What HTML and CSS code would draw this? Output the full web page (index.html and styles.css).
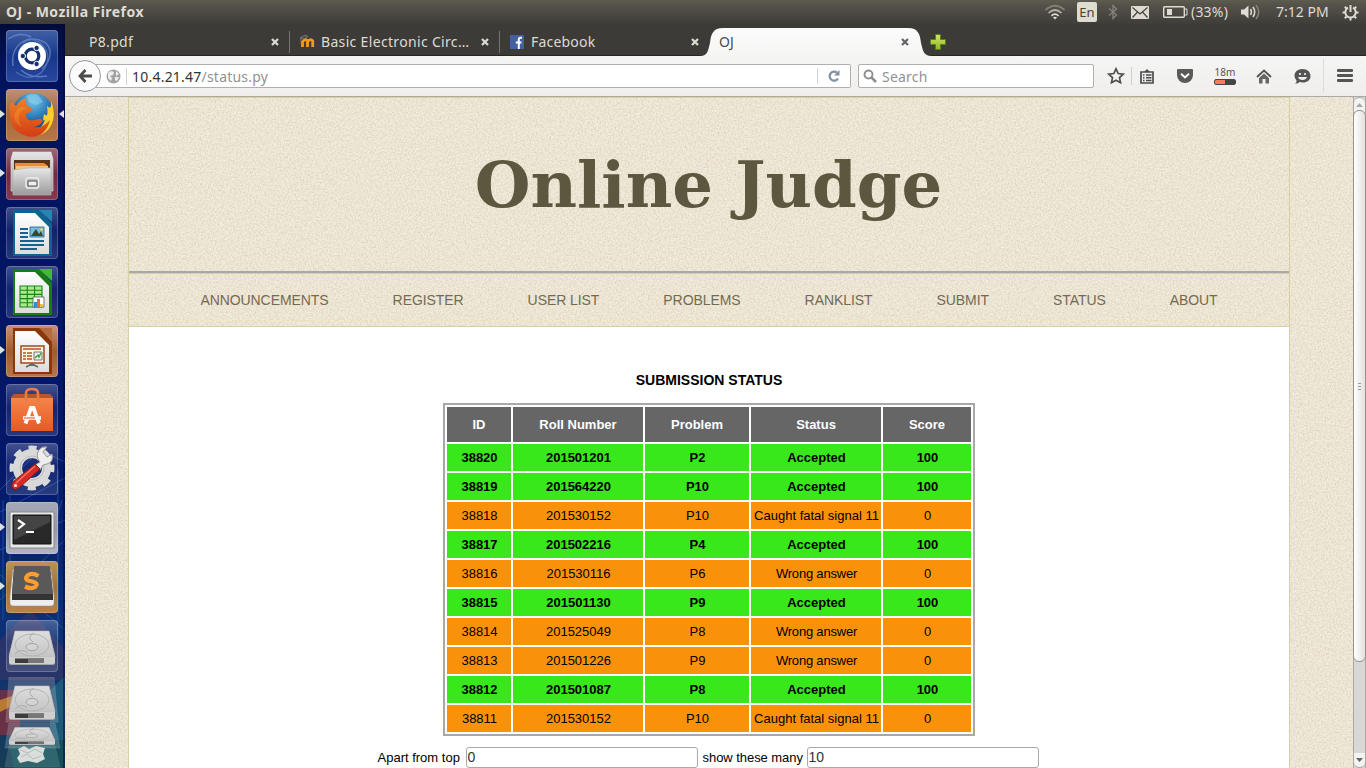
FILE: index.html
```html
<!DOCTYPE html>
<html lang="en">
<head>
<meta charset="utf-8">
<title>OJ</title>
<link rel="stylesheet" href="styles.css">
</head>
<body>
<svg class="defs" width="0" height="0" aria-hidden="true">
  <defs>
    <linearGradient id="silver" x1="0" y1="0" x2="0" y2="1"><stop offset="0" stop-color="#e6e6e6"/><stop offset="1" stop-color="#9a9a9a"/></linearGradient>
    <linearGradient id="paper" x1="0" y1="0" x2="0" y2="1"><stop offset="0" stop-color="#fff"/><stop offset="1" stop-color="#dcdcdc"/></linearGradient>
    <linearGradient id="metal" x1="0" y1="0" x2="0" y2="1"><stop offset="0" stop-color="#dedede"/><stop offset="1" stop-color="#c4c4c4"/></linearGradient>
    <linearGradient id="bag" x1="0" y1="0" x2="0" y2="1"><stop offset="0" stop-color="#f4854c"/><stop offset="1" stop-color="#e85a20"/></linearGradient>
    <radialGradient id="globe" cx=".5" cy=".2" r=".8"><stop offset="0" stop-color="#6fc4ea"/><stop offset=".6" stop-color="#1f66a8"/><stop offset="1" stop-color="#0d3263"/></radialGradient>
    <linearGradient id="fox" x1="0" y1="0" x2="0" y2="1"><stop offset="0" stop-color="#f08028"/><stop offset="1" stop-color="#d33c14"/></linearGradient>
    <linearGradient id="plus" x1="0" y1="0" x2="0" y2="1"><stop offset="0" stop-color="#d4e46a"/><stop offset="1" stop-color="#8fb824"/></linearGradient>
    <linearGradient id="tabfill" x1="0" y1="0" x2="0" y2="1"><stop offset="0" stop-color="#fcfcfc"/><stop offset="1" stop-color="#f5f5f4"/></linearGradient>
    <g id="drive">
      <path d="M9 11H43L49 35V43Q49 45 47 45H5Q3 45 3 43V35Z" fill="#a5a5a5"/>
      <path d="M9 11H43L49 37H3Z" fill="url(#metal)" stroke="#bbb" stroke-width=".6"/>
      <ellipse cx="26" cy="25" rx="17" ry="11" fill="none" stroke="#b5b5b5"/>
      <ellipse cx="26" cy="27" rx="6" ry="3.6" fill="#d4d4d4" stroke="#a2a2a2"/>
      <path d="M28 13Q20 17 27 22M9 34Q14 28 21 32" fill="none" stroke="#aaa"/>
      <path d="M3 37H49V42Q49 44 47 44H5Q3 44 3 42Z" fill="#cfcfcf"/>
      <path d="M9 38.500H38V43H9Z" fill="#3c3c3c"/><path d="M22 38.500H38V43H22Z" fill="#777"/>
    </g>
  </defs>
</svg>

<header class="panel">
  <div class="panel-title">OJ - Mozilla Firefox</div>
  <div class="indicators">
    <svg class="i-wifi" width="22" height="16" viewBox="0 0 22 16" fill="none" stroke-width="1.7"><path d="M1.500 6Q11-2.500 20.500 6" stroke="#817f76"/><path d="M4.500 9Q11 3 17.500 9" stroke="#b5b2a8"/><path d="M7.500 11.800Q11 8.500 14.500 11.800" stroke="#dfdbd2"/><path d="M9 13.500Q11 11.800 13 13.500L11 15.500Z" fill="#dfdbd2"/></svg>
    <span class="lang">En</span>
    <svg class="i-bt" width="10" height="16" viewBox="0 0 10 16" fill="none" stroke="#85837b" stroke-width="1.300"><path d="M1 4.500L8.500 11L5 14.500V1.500L8.500 5L1 11.500"/></svg>
    <svg class="i-mail" width="18" height="13" viewBox="0 0 18 13"><rect width="18" height="13" rx="1" fill="#dfdbd2"/><path d="M1.500 1.500L9 8L16.500 1.500M1.500 11.500L6.500 6M16.500 11.500L11.500 6" fill="none" stroke="#45443e" stroke-width="1.200"/></svg>
    <svg class="i-bat" width="25" height="12" viewBox="0 0 25 12"><rect x=".7" y=".7" width="20.600" height="10.600" rx="1" fill="none" stroke="#dfdbd2" stroke-width="1.400"/><path d="M4 3H9V9H4Z" fill="#dfdbd2"/><path d="M22 3H24V9H22" fill="none" stroke="#dfdbd2"/></svg>
    <span class="pct">(33%)</span>
    <svg class="i-vol" width="20" height="16" viewBox="0 0 20 16"><path d="M0 5.500H3L7.500 1.500V14.500L3 10.500H0Z" fill="#dfdbd2"/><g fill="none" stroke-width="1.500"><path d="M9.500 5Q11.500 8 9.500 11" stroke="#dfdbd2"/><path d="M12 3Q15.500 8 12 13" stroke="#dfdbd2"/><path d="M15 1Q20.500 8 15 15" stroke="#85837b"/></g></svg>
    <span class="clock">7:12 PM</span>
    <svg class="i-gear" width="17" height="17" viewBox="0 0 17 17" fill="none" stroke="#dfdbd2"><path d="M6 3.700A5.200 5.200 0 1 0 11 3.700" stroke-width="1.900"/><path d="M8.500 1V8" stroke-width="2"/><path d="M.5 8.500H3M14 8.500H16.500M8.500 14V16.500M2.800 2.800L4.500 4.500M14.200 2.800L12.500 4.500M2.800 14.200L4.500 12.500M14.200 14.200L12.500 12.500" stroke-width="2"/></svg>
  </div>
</header>

<div class="desktop">
<aside class="launcher">
  <svg class="wall" width="65" height="744" viewBox="0 24 65 744">
    <defs><linearGradient id="w" x1="0" y1="0" x2="0" y2="1"><stop offset="0" stop-color="#020b3a"/><stop offset=".06" stop-color="#03135c"/><stop offset=".6" stop-color="#04186a"/><stop offset=".8" stop-color="#0c2f78"/><stop offset="1" stop-color="#153d55"/></linearGradient></defs>
    <path fill="url(#w)" d="M0 24H65V768H0Z"/>
    <g fill="none" stroke="#2d6fb0" opacity=".55"><path d="M0 490L40 450L65 462M0 512L65 478M0 550L65 520M3 500V620M10 495V600M58 470V640M0 600L65 540M0 575L65 630M62 500L50 540"/></g>
    <path d="M0 640L30 610L65 650V680H0Z" fill="#3a3566" opacity=".6"/><path d="M0 690H20V735H0Z" fill="#8d2d3a" opacity=".7"/><path d="M50 690L65 676V740H50Z" fill="#24728a" opacity=".6"/><path d="M0 700L12 696V706L0 712Z" fill="#b87935"/><path d="M8 740H65V768H14Z" fill="#14545a" opacity=".8"/><path d="M63 24H65V768H63Z" fill="#020a2c" opacity=".5"/>
  </svg>

  <div class="tile ubuntu"><svg viewBox="0 0 52 52"><g fill="none" stroke="#7e9bd5" opacity=".6" stroke-width="1.500"><path d="M7 36C4 15 22 3 38 12C45 16 48 28 36 39"/><path d="M17 13C29 3 42 17 42 29C39 45 25 53 10 42" opacity=".7"/><path d="M2 9Q14 1 25 7M41 46Q25 49 15 40"/></g><circle cx="26" cy="26" r="14" fill="#fff"/><circle cx="26" cy="26" r="6.800" fill="none" stroke="#17316f" stroke-width="3.200"/><g fill="#17316f" stroke="#fff" stroke-width="1"><circle cx="16.800" cy="26" r="2.700"/><circle cx="30.600" cy="18" r="2.700"/><circle cx="30.600" cy="34" r="2.700"/></g></svg></div>

  <div class="tile firefox"><svg viewBox="0 0 52 52"><circle cx="27" cy="25" r="21" fill="url(#globe)"/><path d="M20 7Q26 3 32 6L37 13L30 16L23 13Z" fill="#8bd0ef" opacity=".6"/><path d="M45 12Q52 29 42 41Q31 51 17 44Q34 45 39 31Q36 33 38 25Q43 30 41 17Q46 22 45 12Z" fill="#fbd02d"/><path d="M5 13L10 17Q14 10 21 9Q18 13 22 17L27 20Q23 24 20 25Q20 33 29 31Q34 29 37 31Q34 38 27 38Q36 40 44 31Q40 47 26 48Q7 46 4 29Q3 20 5 13Z" fill="url(#fox)"/><path d="M12 19Q17 17 21 19L15 22Q10 30 16 38Q8 34 8 26Z" fill="#f8ae3d" opacity=".3"/></svg><i class="run"></i><i class="focus"></i></div>

  <div class="tile files"><svg viewBox="0 0 52 52"><path d="M7 4H45L47 11V43H5V11Z" fill="url(#silver)" stroke="#ddd" stroke-width=".6"/><path d="M8 12H44V23H8Z" fill="#56331c"/><path d="M9 15H38L42 18V22H9Z" fill="#f28a31"/><path d="M10 18H42V21H10Z" fill="#fbc07b"/><path d="M7 22L23 20H45V47H7Z" fill="url(#silver)" stroke="#b8b8b8" stroke-width=".7"/><rect x="20" y="30" width="12.500" height="10" rx="2" fill="#bbb" stroke="#eee" stroke-width="1.400"/><path d="M22 33H31V38H22Z" fill="#eee" stroke="#555"/></svg><i class="run"></i></div>

  <div class="tile writer"><svg viewBox="0 0 52 52"><path d="M7 3H34L46 17V49H7Z" fill="#0c658f"/><path d="M33 3H46V15Z" fill="#2387b2"/><path d="M9 6H29L43 20V47H9Z" fill="url(#paper)"/><path d="M14 22H22M14 26H22M14 30H22M14 34H38M14 38H38M14 42H31" stroke="#16638f" stroke-width="2"/><path d="M24 20H38V30H24Z" fill="#79bce0" stroke="#19638b" stroke-width=".8"/><path d="M25 29L30 22L33 27L35 24L37 29Z" fill="#36482d"/><circle cx="35.500" cy="22.500" r="1.300" fill="#f7db38"/></svg></div>

  <div class="tile calc"><svg viewBox="0 0 52 52"><path d="M7 3H34L46 17V49H7Z" fill="#177c18"/><path d="M33 3H46V15Z" fill="#42b939"/><path d="M9 6H29L43 20V47H9Z" fill="url(#paper)"/><path d="M14 20H36V41H14Z" fill="#a7eb88"/><path d="M14 20H36V41H14ZM14 24.200H36M14 28.400H36M14 32.600H36M14 36.800H36M21.300 20V41M28.600 20V41" fill="none" stroke="#18851b" stroke-width="1.100"/><path d="M27 31H38V41H27Z" fill="#fff" stroke="#555" stroke-width=".8"/><path d="M28 36H31V41H28Z" fill="#2e91cb"/><path d="M31 33H34V41H31Z" fill="#ee6c28"/><path d="M34 38H37V41H34Z" fill="#edc429"/></svg></div>

  <div class="tile impress"><svg viewBox="0 0 52 52"><path d="M7 3H34L46 17V49H7Z" fill="#8b3709"/><path d="M33 3H46V15Z" fill="#b46b40"/><path d="M9 6H29L43 20V47H9Z" fill="url(#paper)"/><path d="M15 21H38V38H15Z" fill="#fff4e5" stroke="#a44817" stroke-width="1.500"/><path d="M17 24H35M17 28H20M17 31H20M17 34H20M21 28H26M21 31H26M21 34H26" stroke="#b65220" stroke-width="1.700"/><path d="M28 27H36V35H28Z" fill="#eee" stroke="#555" stroke-width=".8"/><path d="M29 33L32 30L33 32L35 28" fill="none" stroke="#369c32" stroke-width="1.300"/><path d="M20 42L26 39L32 42M26 38V41" fill="none" stroke="#666" stroke-width="1.700"/></svg><i class="run"></i></div>

  <div class="tile software"><svg viewBox="0 0 52 52"><path d="M5 13L8 10H44L47 13V15H5Z" fill="#b8542e"/><path d="M5 14H47V47H5Z" fill="url(#bag)"/><path d="M20 18V9Q20 5 26 5Q32 5 32 9V18" fill="none" stroke="#ee7a4b" stroke-width="2.600"/><path d="M19.500 39.500L25 24H27.500L33 39.500" fill="none" stroke="#fff" stroke-width="3.800"/><path d="M17 34H35" stroke="#fff" stroke-width="3.600"/><path d="M18 34H29" stroke="#ed6a2c" stroke-width="1.200"/></svg></div>

  <div class="tile settings"><svg viewBox="0 0 52 52"><circle cx="26" cy="25" r="14.500" fill="none" stroke="#d9d9d9" stroke-width="9"/><circle cx="26" cy="25" r="20" fill="none" stroke="#d9d9d9" stroke-width="5" stroke-dasharray="8 7.700" stroke-dashoffset="4"/><circle cx="26" cy="25" r="12" fill="none" stroke="#bcbcbc"/><path d="M34 19Q29 13 33 7Q36 3 41 4L37 9L41 14L46 11Q48 19 41 21L37 22L34 27L29 22Z" fill="#eee" stroke="#999"/><path d="M29 21L34 26L14 44Q8 49 6 44Q5 41 8 38Z" fill="#d52a26" stroke="#8c1715"/><path d="M29 23L10 40" stroke="#ef7467" stroke-width="1.500"/><circle cx="9.500" cy="42.500" r="1.600" fill="#eee"/></svg></div>

  <div class="tile terminal"><svg viewBox="0 0 52 52"><path d="M4 10H48V46H4Z" fill="#e8e8e8" stroke="#888"/><path d="M7 13H45V42H7Z" fill="#292929" stroke="#111"/><path d="M8 14H44V20L8 38Z" fill="#575757" opacity=".6"/><path d="M12 18L18 22L12 27" fill="none" stroke="#fff" stroke-width="2.200"/><path d="M20 30H28" stroke="#fff" stroke-width="2"/></svg><i class="run"></i></div>

  <div class="tile sublime"><svg viewBox="0 0 52 52"><path d="M7 8H45L48 35V42Q48 45 45 45H7Q4 45 4 42V35Z" fill="#eee" stroke="#999" stroke-width=".6"/><path d="M10 5H42Q44 5 44 7L47 34V39H6V34L8 7Q8 5 10 5Z" fill="#343434"/><path d="M10 5H42Q44 5 44 7L47 33H6L8 7Q8 5 10 5Z" fill="#595959"/><path d="M32.500 15Q26 11 21.500 14.500Q18 18.500 23 19.800L28 21Q33 23 29 26Q25 28.500 19 25.500" fill="none" stroke="#ff9d30" stroke-width="4.200"/></svg><i class="run"></i></div>

  <div class="tile disk"><svg viewBox="0 0 52 52"><use href="#drive"/></svg></div>

  <svg class="stack" width="65" height="91" viewBox="0 677 65 91">
    <path d="M9 677H54L58 722H6Z" fill="#cbb6c0" opacity=".28" stroke="#fff" stroke-opacity=".6"/><use href="#drive" x="6" y="675"/>
    <path d="M9 723H55L60 748H5Z" fill="#a9b8c8" opacity=".3" stroke="#fff" stroke-opacity=".5"/><g transform="translate(6 722) scale(1 .51)"><use href="#drive"/></g>
    <path d="M9 746H55L60 767H5Z" fill="#9cc0c0" opacity=".2" stroke="#fff" stroke-opacity=".5"/><path d="M18 749L24 746L29 749L36 746L45 748L43 754L45 759L37 763L28 761L20 763L17 758L20 754Z" fill="#d9dedc"/><path d="M20 750L28 753L35 749L42 753M21 757L27 754L33 759L41 756" fill="none" stroke="#b4bcba"/>
  </svg>
</aside>

<main class="browser">
  <div class="tabs">
    <div class="tab t1"><span class="label">P8.pdf</span><svg class="x" viewBox="0 0 10 10"><path d="M2 2L8 8M8 2L2 8"/></svg></div>
    <div class="tab t2"><svg class="fav" width="15" height="15" viewBox="0 0 15 15"><path d="M2.500 13V7M2.500 8Q5 4 7.500 7V13M7.500 8Q10 4 12.700 7V13" fill="none" stroke="#f59b17" stroke-width="2.800"/><path d="M0 4L5 1L8 2.500L4 5ZM1 4V10" fill="#4b4b49" stroke="#888" stroke-width=".7"/></svg><span class="label">Basic Electronic Circ…</span><svg class="x" viewBox="0 0 10 10"><path d="M2 2L8 8M8 2L2 8"/></svg></div>
    <div class="tab t3"><svg class="fav" width="14" height="14" viewBox="0 0 14 14"><path fill="#4560a0" d="M0 0H14V14H0Z"/><path d="M12 2.800H10.500Q8.800 2.800 8.800 4.500V14M5.800 7.500H11.500" fill="none" stroke="#fff" stroke-width="2"/></svg><span class="label">Facebook</span><svg class="x" viewBox="0 0 10 10"><path d="M2 2L8 8M8 2L2 8"/></svg></div>
    <div class="tab active"><svg class="shape" width="236" height="28" viewBox="0 0 236 28"><path d="M0 28C8 28 8 22 10 15C11 6 13 0 23 0H208C218 0 220 6 221 15C223 22 223 28 232 28Z" fill="url(#tabfill)"/></svg><span class="label">OJ</span><svg class="x" viewBox="0 0 10 10"><path d="M2 2L8 8M8 2L2 8"/></svg></div>
    <svg class="add" width="16" height="16" viewBox="0 0 16 16"><path d="M5.500.5H10.500V5.500H15.500V10.500H10.500V15.500H5.500V10.500H.5V5.500H5.500Z" fill="url(#plus)" stroke="#56801c"/></svg>
  </div>

  <div class="toolbar">
    <div class="back"><svg width="16" height="16" viewBox="0 0 16 16" fill="none" stroke="#4c4c4c" stroke-width="2.800"><path d="M8.500 2L3 8L8.500 14M3 8H15"/></svg></div>
    <div class="url">
      <svg class="world" width="15" height="15" viewBox="0 0 15 15"><circle cx="7.500" cy="7.500" r="7" fill="#a3a3a3"/><path d="M2 4L5 2L8 3L7 6L4 7L6 9L5 12L2 9ZM10 2L13 5L10 7ZM9 8L13 8L11 12L9 11Z" fill="#eee"/></svg>
      <span class="address">10.4.21.47<em>/status.py</em></span>
      <span class="reload"><svg width="14" height="14" viewBox="0 0 14 14"><path d="M11 9.500A4.500 4.500 0 1 1 10 3.700" fill="none" stroke="#8290a0" stroke-width="2.200"/><path d="M12.500 1V6.500H7Z" fill="#8290a0"/></svg></span>
    </div>
    <div class="search"><svg width="14" height="14" viewBox="0 0 14 14" fill="none" stroke="#8d8d8d"><circle cx="5.500" cy="5.500" r="4" stroke-width="1.900"/><path d="M8.500 8.500L13 13" stroke-width="2.500"/></svg><span>Search</span></div>
    <div class="tools">
      <svg width="18" height="18" viewBox="0 0 18 18"><path d="M9 1.800L11.200 6.500L16.300 7.100L12.500 10.600L13.500 15.700L9 13.200L4.500 15.700L5.500 10.600L1.700 7.100L6.800 6.500Z" fill="none" stroke="#4c4c4c" stroke-width="1.700"/></svg>
      <i class="s1"></i>
      <svg class="list" width="14" height="15" viewBox="0 0 14 15"><path d="M1 3H13V14H1Z" fill="#eee" stroke="#4c4c4c" stroke-width="1.700"/><path d="M4 3L7 0L10 3Z" fill="#4c4c4c"/><path d="M3 6H4.500M6 6H11.500M3 8.800H4.500M6 8.800H11.500M3 11.500H4.500M6 11.500H11.500" stroke="#4c4c4c" stroke-width="1.400"/></svg>
      <svg class="pocket" width="16" height="14" viewBox="0 0 16 14"><path d="M1 0H15Q16 0 16 1V6A8 8 0 0 1 0 6V1Q0 0 1 0Z" fill="#5a5a5a"/><path d="M4 4.800L8 8.500L12 4.800" fill="none" stroke="#fff" stroke-width="2"/></svg>
      <span class="timer"><b>18m</b><u></u></span>
      <svg class="home" width="16" height="15" viewBox="0 0 16 15"><path d="M1 8L8 1.500L15 8" fill="none" stroke="#555" stroke-width="1.800"/><path d="M3 9L8 4.500L13 9V14.500H9.500V10H6.500V14.500H3Z" fill="#666"/></svg>
      <svg class="chat" width="17" height="15" viewBox="0 0 17 15"><path d="M8.500 0C13.500 0 16.500 3 16.500 7S13.500 13.500 8.500 13.500L5.500 13Q4 15 1 14.500Q3 13.500 2.500 11.500Q.5 9.500 .5 7C.5 3 3.500 0 8.500 0Z" fill="#555"/><path d="M6 4V6M11 4V6" stroke="#eee" stroke-width="1.700"/><path d="M4 8H13Q12 11 8.500 11T4 8Z" fill="#eee"/></svg>
      <i class="s2"></i>
      <svg class="menu" width="16" height="14" viewBox="0 0 16 14"><g fill="#555"><rect width="16" height="3" rx="1"/><rect y="5" width="16" height="3" rx="1"/><rect y="10" width="16" height="3" rx="1"/></g></svg>
    </div>
  </div>

  <div class="viewport">
    <div class="page">
      <svg class="grain" width="1288" height="671"><filter id="noise" x="0" y="0" width="100%" height="100%" color-interpolation-filters="sRGB"><feTurbulence type="fractalNoise" baseFrequency=".6" numOctaves="3" seed="4"/><feColorMatrix values="0 0 0 0 .60  0 0 0 0 .56  0 0 0 0 .46  .45 .25 0 0 -.27"/></filter><rect width="100%" height="100%" filter="url(#noise)"/></svg>
      <div class="wrapper">
        <div class="banner"><h1>Online Judge</h1></div>
        <nav class="menu-bar"><a>ANNOUNCEMENTS</a><a>REGISTER</a><a>USER LIST</a><a>PROBLEMS</a><a>RANKLIST</a><a>SUBMIT</a><a>STATUS</a><a>ABOUT</a></nav>
        <section class="content">
          <h2>SUBMISSION STATUS</h2>
          <table class="status">
            <colgroup><col class="c1"><col class="c2"><col class="c3"><col class="c4"><col class="c5"></colgroup>
            <tr><th>ID</th><th>Roll Number</th><th>Problem</th><th>Status</th><th>Score</th></tr>
            <tr class="ok"><td>38820</td><td>201501201</td><td>P2</td><td>Accepted</td><td>100</td></tr>
            <tr class="ok"><td>38819</td><td>201564220</td><td>P10</td><td>Accepted</td><td>100</td></tr>
            <tr class="bad"><td>38818</td><td>201530152</td><td>P10</td><td>Caught fatal signal 11</td><td>0</td></tr>
            <tr class="ok"><td>38817</td><td>201502216</td><td>P4</td><td>Accepted</td><td>100</td></tr>
            <tr class="bad"><td>38816</td><td>201530116</td><td>P6</td><td class="wrong">Wrong answer</td><td>0</td></tr>
            <tr class="ok"><td>38815</td><td>201501130</td><td>P9</td><td>Accepted</td><td>100</td></tr>
            <tr class="bad"><td>38814</td><td>201525049</td><td>P8</td><td class="wrong">Wrong answer</td><td>0</td></tr>
            <tr class="bad"><td>38813</td><td>201501226</td><td>P9</td><td class="wrong">Wrong answer</td><td>0</td></tr>
            <tr class="ok"><td>38812</td><td>201501087</td><td>P8</td><td>Accepted</td><td>100</td></tr>
            <tr class="bad"><td>38811</td><td>201530152</td><td>P10</td><td>Caught fatal signal 11</td><td>0</td></tr>
          </table>
          <form class="range"><label class="l1">Apart from top</label><input value="0"><label class="l2">show these many</label><input value="10"></form>
        </section>
      </div>
    </div>
    <div class="scrollbar"><span class="btn"><svg width="7" height="4"><path d="M0 4L3.500 0L7 4Z" fill="#aaa"/></svg></span><span class="thumb"><i></i><i></i><i></i></span><span class="track"></span><span class="btn down"><svg width="7" height="4"><path d="M0 0H7L3.500 4Z" fill="#666"/></svg></span></div>
  </div>
</main>
</div>
</body>
</html>
```
FILE: styles.css
```css
* { box-sizing: border-box; }
body { margin: 0; width: 1366px; height: 768px; overflow: hidden; font-family: "Noto Sans", "Open Sans", sans-serif; }
svg { display: block; flex: none; }
.defs { position: absolute; }

.panel { height: 24px; display: flex; justify-content: space-between; background: linear-gradient(#5e5b50, #55524a 20%, #3e3d38); color: #dfdbd2; }
.panel-title { padding-left: 6px; font: bold 14px/24px "Noto Sans", sans-serif; letter-spacing: .45px; white-space: nowrap; }
.indicators { display: flex; align-items: center; width: 322px; font-size: 14px; line-height: 24px; white-space: nowrap; }
.lang { width: 20px; height: 20px; margin-left: 11px; background: #dfdbd2; border-radius: 2px; color: #45433d; font-size: 13px; line-height: 21px; text-align: center; }
.i-bt { margin-left: 11px; }
.i-mail { margin-left: 13px; }
.i-bat { margin-left: 14px; }
.pct { width: 38px; margin-left: 3px; letter-spacing: .2px; }
.i-vol { margin-left: 12px; }
.clock { width: 54px; margin-left: 15px; }
.i-gear { margin-left: 12px; }

.desktop { display: flex; height: 744px; }
.launcher { position: relative; width: 65px; height: 744px; padding: 6px 0 0; display: flex; flex-direction: column; gap: 7px; overflow: hidden; }
.wall { position: absolute; left: 0; top: 0; }
.tile { position: relative; flex: none; width: 52px; height: 52px; margin-left: 6px; border-radius: 4px; background: linear-gradient(rgba(255,255,255,.25), rgba(255,255,255,.06) 45%, rgba(255,255,255,.14)); box-shadow: inset 0 0 0 1px rgba(255,255,255,.2); }
.tile svg { width: 52px; height: 52px; }
.ubuntu { background: linear-gradient(#4061a5, #17378a 50%, #2848a0); }
.firefox { background: linear-gradient(#bc9078, #a76739 50%, #b67848); }
.files { background: linear-gradient(#9c6978, #732a40 50%, #85394e); }
.impress { background: linear-gradient(#c59473, #a15b31 50%, #b5764b); }
.terminal { background: linear-gradient(#a5a8b6, #9499ac 50%, #b2b5c4); }
.sublime { background: linear-gradient(#bd925c, #a47034 50%, #b98349); }
.run { position: absolute; left: -6px; top: 21px; border: solid transparent; border-width: 4px 0 4px 5px; border-left-color: #e0e0e0; }
.focus { position: absolute; right: -6px; top: 21px; border: solid transparent; border-width: 4px 5px 4px 0; border-right-color: #e0e0e0; }
.stack { position: relative; margin-top: -2px; }

.browser { width: 1301px; display: flex; flex-direction: column; background: #3c3b37; }
.tabs { height: 32px; padding-left: 15px; display: flex; border-bottom: 1px solid #262522; color: #dfdbd2; font-size: 14px; }
.tab { position: relative; display: flex; align-items: center; width: 210px; height: 31px; padding: 4px 10px 0 10px; }
.t1 { padding-left: 9px; }
.tab:not(.active)::after { content: ""; position: absolute; right: 0; top: 7px; width: 1px; height: 22px; background: #75736d; }
.tab.t3::after { display: none; }
.fav { margin-right: 7px; }
.t2 .fav { margin-right: 6px; }
.label { white-space: nowrap; line-height: 20px; }
.t1 .label { letter-spacing: .3px; }
.t2 .label { letter-spacing: .33px; }
.t3 .label { letter-spacing: .2px; }
.x { width: 10px; height: 10px; margin-left: auto; fill: none; stroke: #dedad1; stroke-width: 2.300; }
.active { padding-left: 9px; color: #4c4c4c; width: 210px; }
.active .label, .active .x { position: relative; }
.active .x { stroke: #666; }
.shape { position: absolute; left: -10px; top: 4px; }
.add { margin: 10px 0 0 10px; }

.toolbar { position: relative; height: 41px; display: flex; align-items: center; background: linear-gradient(#f5f5f4, #efeeed); border-bottom: 1px solid #aba9a3; }
.back { position: relative; z-index: 1; width: 32px; height: 32px; margin-left: 4px; border: 1px solid #94989f; border-radius: 50%; background: #fbfbfb; display: flex; align-items: center; justify-content: center; }
.url { width: 755px; height: 24px; margin-left: -5px; display: flex; align-items: center; background: #fff; border: 1px solid #b1afab; border-left: 0; border-radius: 0 2px 2px 0; font-size: 14px; color: #333; }
.world { margin-left: 10px; }
.address { margin-left: 5px; padding-left: 5px; border-left: 1px solid #d2d2d2; line-height: 17px; letter-spacing: .22px; }
.address em { font-style: normal; color: #929292; }
.reload { width: 33px; height: 16px; margin-left: auto; padding: 1px 0 0 9px; border-left: 1px solid #d2d2d2; }
.search { width: 236px; height: 24px; margin-left: 7px; padding-left: 4px; display: flex; align-items: center; gap: 5px; background: #fff; border: 1px solid #b1afab; border-radius: 2px; font-size: 14px; color: #929292; }
.search span { letter-spacing: .2px; }
.tools { display: flex; align-items: center; height: 40px; margin-left: 13px; }
.s1 { width: 1px; height: 18px; margin-left: 6px; background: #d0d0cf; }
.list { margin-left: 8px; }
.pocket { margin-left: 23px; }
.timer { width: 22px; margin-left: 21px; font-size: 10px; line-height: 9px; color: #555; }
.timer b { display: block; font-weight: normal; text-align: center; height: 11px; }
.timer u { display: block; height: 6px; border: 1px solid #4b4443; border-radius: 2px; background: linear-gradient(90deg, #f77d57 10px, #444 10px); }
.home { margin-left: 20px; }
.chat { margin-left: 22px; }
.s2 { width: 1px; height: 34px; margin-left: 12px; background: #dcdcda; }
.menu { margin-left: 13px; }

.viewport { height: 671px; display: flex; }
.page { position: relative; width: 1288px; height: 671px; overflow: hidden; background: #f3ecdb; font-family: "Liberation Sans", Arial, sans-serif; }
.grain { position: absolute; left: 0; top: 0; }
.wrapper { position: relative; width: 1162px; height: 671px; margin: 0 auto; border: 1px solid #d7d0a3; border-bottom: 0; }
.banner { height: 175px; border-bottom: 2px solid #a8a8a8; }
.banner h1 { margin: 0; padding: 50px 1px 0 0; font: bold 64px/74px "DejaVu Serif", serif; color: #5c5840; text-align: center; }
.menu-bar { height: 54px; display: flex; gap: 64px; justify-content: center; border: solid #d7d0a3; border-width: 1px 0; font-size: 14px; line-height: 52px; letter-spacing: -.07px; color: #736b50; white-space: nowrap; }
.content { height: 441px; background: #fff; color: #000; overflow: hidden; }
.content h2 { margin: 0; padding-top: 43px; font-size: 14px; line-height: 20px; text-align: center; }
.status { width: 532px; margin: 13px auto 0; table-layout: fixed; border: 2px solid #a8a8a8; border-collapse: separate; border-spacing: 2px; font-size: 13px; text-align: center; white-space: nowrap; }
.c1 { width: 64px; }
.c2 { width: 130px; }
.c3 { width: 104px; }
.c4 { width: 130px; }
.c5 { width: 88px; }
.status th { height: 35px; padding: 0; background: #666; color: #fff; }
.status td { height: 27px; padding: 0 0 0 1px; }
.status .wrong { letter-spacing: -.2px; }
.ok { font-weight: bold; }
.ok td { background: #38e81a; }
.bad td { background: #fa9209; }
.range { display: flex; align-items: center; width: 663px; height: 22px; margin: 10px auto 0; font-size: 13px; white-space: nowrap; }
.l1 { width: 88px; }
.l2 { width: 104px; margin-left: 5px; letter-spacing: -.05px; }
.range input { width: 232px; height: 21px; margin: 0; padding: 0 1px; border: 1px solid #aaa9a5; border-radius: 3px; font: 14px "Liberation Sans", sans-serif; color: #333; background: #fff; }

.scrollbar { width: 13px; height: 671px; display: flex; flex-direction: column; background: #d9d7d5; border-left: 1px solid #aaa7a2; border-right: 1px solid #aaa7a2; }
.btn { height: 15px; display: flex; justify-content: center; align-items: center; background: #f3f3f2; border-radius: 6px 6px 0 0; border-top: 1px solid #aaa7a2; }
.thumb { height: 552px; margin: -2px -1px 0; border: 1px solid #96938f; border-radius: 6px; background: linear-gradient(90deg, #fff, #e3e1df); display: flex; flex-direction: column; align-items: center; justify-content: center; gap: 2px; }
.thumb i { width: 3px; height: 1px; background: #999; }
.track { flex: 1; }
.down { border: 0; border-bottom: 1px solid #aaa7a2; border-radius: 0 0 6px 6px; }
```
